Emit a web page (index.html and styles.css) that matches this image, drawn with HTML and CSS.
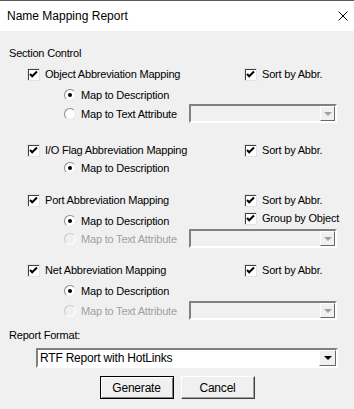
FILE: index.html
```html
<!DOCTYPE html>
<html lang="en">
<head>
    <meta charset="UTF-8">
    <meta name="viewport" content="width=device-width, initial-scale=1.0">
    <title>Name Mapping Report</title>
    <link rel="stylesheet" href="styles.css">
</head>
<body>
<div class="window">
    <div class="titlebar">
        <span class="title">Name Mapping Report</span>
        <svg class="close" width="10" height="10" viewBox="0 0 10 10"><path d="M0.5 0.5 L9.5 9.5 M9.5 0.5 L0.5 9.5" stroke="#000" stroke-width="1" fill="none"/></svg>
    </div>
    <div class="content">
        <div class="row section-label">Section Control</div>

        <!-- Object -->
        <div class="row check-row r-obj">
            <label class="check main"><span class="box"><svg width="11" height="11" viewBox="0 0 11 11"><path d="M2 5 L4.2 7.3 L9 2.5" stroke="#000" stroke-width="2" fill="none"/></svg></span>Object Abbreviation Mapping</label>
            <label class="check"><span class="box"><svg width="11" height="11" viewBox="0 0 11 11"><path d="M2 5 L4.2 7.3 L9 2.5" stroke="#000" stroke-width="2" fill="none"/></svg></span>Sort by Abbr.</label>
        </div>
        <div class="row radio-row r-desc">
            <label class="radio"><span class="dot on"></span>Map to Description</label>
        </div>
        <div class="row radio-row r-text">
            <label class="radio wide"><span class="dot"></span>Map to Text Attribute</label>
            <div class="drop"><span class="drop-btn"><span class="tri gray"></span></span></div>
        </div>

        <!-- I/O Flag -->
        <div class="row check-row r-io">
            <label class="check main"><span class="box"><svg width="11" height="11" viewBox="0 0 11 11"><path d="M2 5 L4.2 7.3 L9 2.5" stroke="#000" stroke-width="2" fill="none"/></svg></span>I/O Flag Abbreviation Mapping</label>
            <label class="check"><span class="box"><svg width="11" height="11" viewBox="0 0 11 11"><path d="M2 5 L4.2 7.3 L9 2.5" stroke="#000" stroke-width="2" fill="none"/></svg></span>Sort by Abbr.</label>
        </div>
        <div class="row radio-row r-io-desc">
            <label class="radio"><span class="dot on"></span>Map to Description</label>
        </div>

        <!-- Port -->
        <div class="row check-row r-port">
            <label class="check main"><span class="box"><svg width="11" height="11" viewBox="0 0 11 11"><path d="M2 5 L4.2 7.3 L9 2.5" stroke="#000" stroke-width="2" fill="none"/></svg></span>Port Abbreviation Mapping</label>
            <label class="check"><span class="box"><svg width="11" height="11" viewBox="0 0 11 11"><path d="M2 5 L4.2 7.3 L9 2.5" stroke="#000" stroke-width="2" fill="none"/></svg></span>Sort by Abbr.</label>
        </div>
        <div class="row split-row">
            <label class="radio port-desc"><span class="dot on"></span>Map to Description</label>
            <label class="check"><span class="box"><svg width="11" height="11" viewBox="0 0 11 11"><path d="M2 5 L4.2 7.3 L9 2.5" stroke="#000" stroke-width="2" fill="none"/></svg></span>Group by Object</label>
        </div>
        <div class="row radio-row">
            <label class="radio wide disabled"><span class="dot"></span>Map to Text Attribute</label>
            <div class="drop"><span class="drop-btn"><span class="tri gray"></span></span></div>
        </div>

        <!-- Net -->
        <div class="row check-row r-net">
            <label class="check main"><span class="box"><svg width="11" height="11" viewBox="0 0 11 11"><path d="M2 5 L4.2 7.3 L9 2.5" stroke="#000" stroke-width="2" fill="none"/></svg></span>Net Abbreviation Mapping</label>
            <label class="check"><span class="box"><svg width="11" height="11" viewBox="0 0 11 11"><path d="M2 5 L4.2 7.3 L9 2.5" stroke="#000" stroke-width="2" fill="none"/></svg></span>Sort by Abbr.</label>
        </div>
        <div class="row radio-row r-desc">
            <label class="radio"><span class="dot on"></span>Map to Description</label>
        </div>
        <div class="row radio-row r-net-text">
            <label class="radio wide disabled"><span class="dot"></span>Map to Text Attribute</label>
            <div class="drop"><span class="drop-btn"><span class="tri gray"></span></span></div>
        </div>

        <div class="row section-label r-format">Report Format:</div>
        <div class="combo">
            <span class="combo-text">RTF Report with HotLinks</span>
            <span class="drop-btn"><span class="tri"></span></span>
        </div>

        <div class="buttons">
            <button class="btn default">Generate</button>
            <button class="btn">Cancel</button>
        </div>
    </div>
</div>
</body>
</html>
```
FILE: styles.css
```css
body {
    margin: 0;
    font-family: "Liberation Sans", Arial, sans-serif;
    background: #f0f0f0;
}
.window {
    width: 354px;
    height: 409px;
    box-sizing: border-box;
    border-top: 1px solid #5a5a5a;
    background: #f0f0f0;
    overflow: hidden;
}
.titlebar {
    height: 30px;
    background: #ffffff;
    display: flex;
    align-items: center;
    justify-content: space-between;
    padding: 0 6px 0 7px;
}
.title {
    font-size: 12px;
    color: #000;
}
.content {
    padding: 13px 0 0 9px;
    font-size: 11px;
    letter-spacing: -0.2px;
    color: #000;
}
.row {
    display: flex;
    align-items: center;
    height: 18px;
}
.section-label {
    padding-left: 0;
}
.check-row {
    padding-left: 18px;
}
.radio-row {
    padding-left: 55px;
    height: 19px;
}
.r-obj { margin-top: 3px; }
.r-desc { margin-top: 3px; height: 18px; }
.r-text { margin-top: 0; }
.r-io { margin-top: 18px; }
.r-io-desc { height: 17px; }
.r-port { margin-top: 15px; }
.r-net { margin-top: 13px; }
.r-net-text { margin-top: 1px; }
.r-format { margin-top: 6px; }

.check, .radio {
    display: flex;
    align-items: center;
    white-space: nowrap;
}
.check.main {
    width: 217px;
}
.radio.wide {
    width: 125px;
}
.disabled {
    color: #a0a0a0;
}

/* checkbox */
.box {
    width: 11px;
    height: 11px;
    background: #fff;
    border-top: 1px solid #808080;
    border-left: 1px solid #808080;
    border-bottom: 1px solid #fff;
    border-right: 1px solid #fff;
    box-shadow: inset 1px 1px 0 #404040, 0 0 0 0 transparent;
    margin-right: 5px;
    display: flex;
    align-items: center;
    justify-content: center;
    outline: 1px solid #e3e3e3;
    outline-offset: -1px;
}
.box svg {
    display: block;
}

/* radio */
.dot {
    width: 10px;
    height: 10px;
    border-radius: 50%;
    background: #fff;
    border: 1px solid #8a8a8a;
    border-right-color: #e8e8e8;
    border-bottom-color: #e8e8e8;
    margin-right: 5px;
    display: flex;
    align-items: center;
    justify-content: center;
}
.dot.on::after {
    content: "";
    width: 4px;
    height: 4px;
    border-radius: 50%;
    background: #000;
}
.disabled .dot {
    background: #f0f0f0;
    border-color: #c8c8c8 #fff #fff #c8c8c8;
}

/* split row with port description and group checkbox */
.split-row {
    padding-left: 55px;
    height: 20px;
    align-items: flex-start;
}
.port-desc {
    width: 180px;
    height: 18px;
    margin-top: 3px;
}
.split-row .check {
    height: 18px;
}

/* disabled drop list */
.drop {
    width: 144px;
    height: 15px;
    margin-left: 0;
    background: #f0f0f0;
    border-top: 2px solid #808080;
    border-left: 2px solid #808080;
    border-bottom: 2px solid #fff;
    border-right: 2px solid #fff;
    display: flex;
    justify-content: flex-end;
}
.drop-btn {
    width: 15px;
    height: 100%;
    box-sizing: border-box;
    background: #f0f0f0;
    border-top: 1px solid #fff;
    border-left: 1px solid #fff;
    border-bottom: 1px solid #696969;
    border-right: 1px solid #696969;
    display: flex;
    align-items: center;
    justify-content: center;
}
.tri {
    width: 0;
    height: 0;
    border-left: 4px solid transparent;
    border-right: 4px solid transparent;
    border-top: 4px solid #000;
}
.tri.gray {
    border-top-color: #a0a0a0;
}

/* report format combo */
.combo {
    margin: 4px 0 0 27px;
    width: 298px;
    height: 16px;
    background: #fff;
    border-top: 2px solid #808080;
    border-left: 2px solid #808080;
    border-bottom: 2px solid #fff;
    border-right: 2px solid #fff;
    display: flex;
    align-items: center;
    justify-content: space-between;
}
.combo-text {
    padding-left: 2px;
    font-size: 12px;
}
.combo .drop-btn {
    width: 17px;
}

/* buttons */
.buttons {
    display: flex;
    justify-content: center;
    gap: 7px;
    margin-top: 8px;
    margin-left: -9px;
}
.btn {
    width: 74px;
    height: 23px;
    font-family: "Liberation Sans", Arial, sans-serif;
    font-size: 12px;
    letter-spacing: -0.2px;
    color: #000;
    background: #f0f0f0;
    border-top: 1px solid #fff;
    border-left: 1px solid #fff;
    border-bottom: 1px solid #404040;
    border-right: 1px solid #404040;
    box-shadow: inset -1px -1px 0 #a0a0a0;
    padding: 0;
}
.btn.default {
    border: 1px solid #000;
    box-shadow: inset 1px 1px 0 #fff, inset -1px -1px 0 #808080;
}
```
